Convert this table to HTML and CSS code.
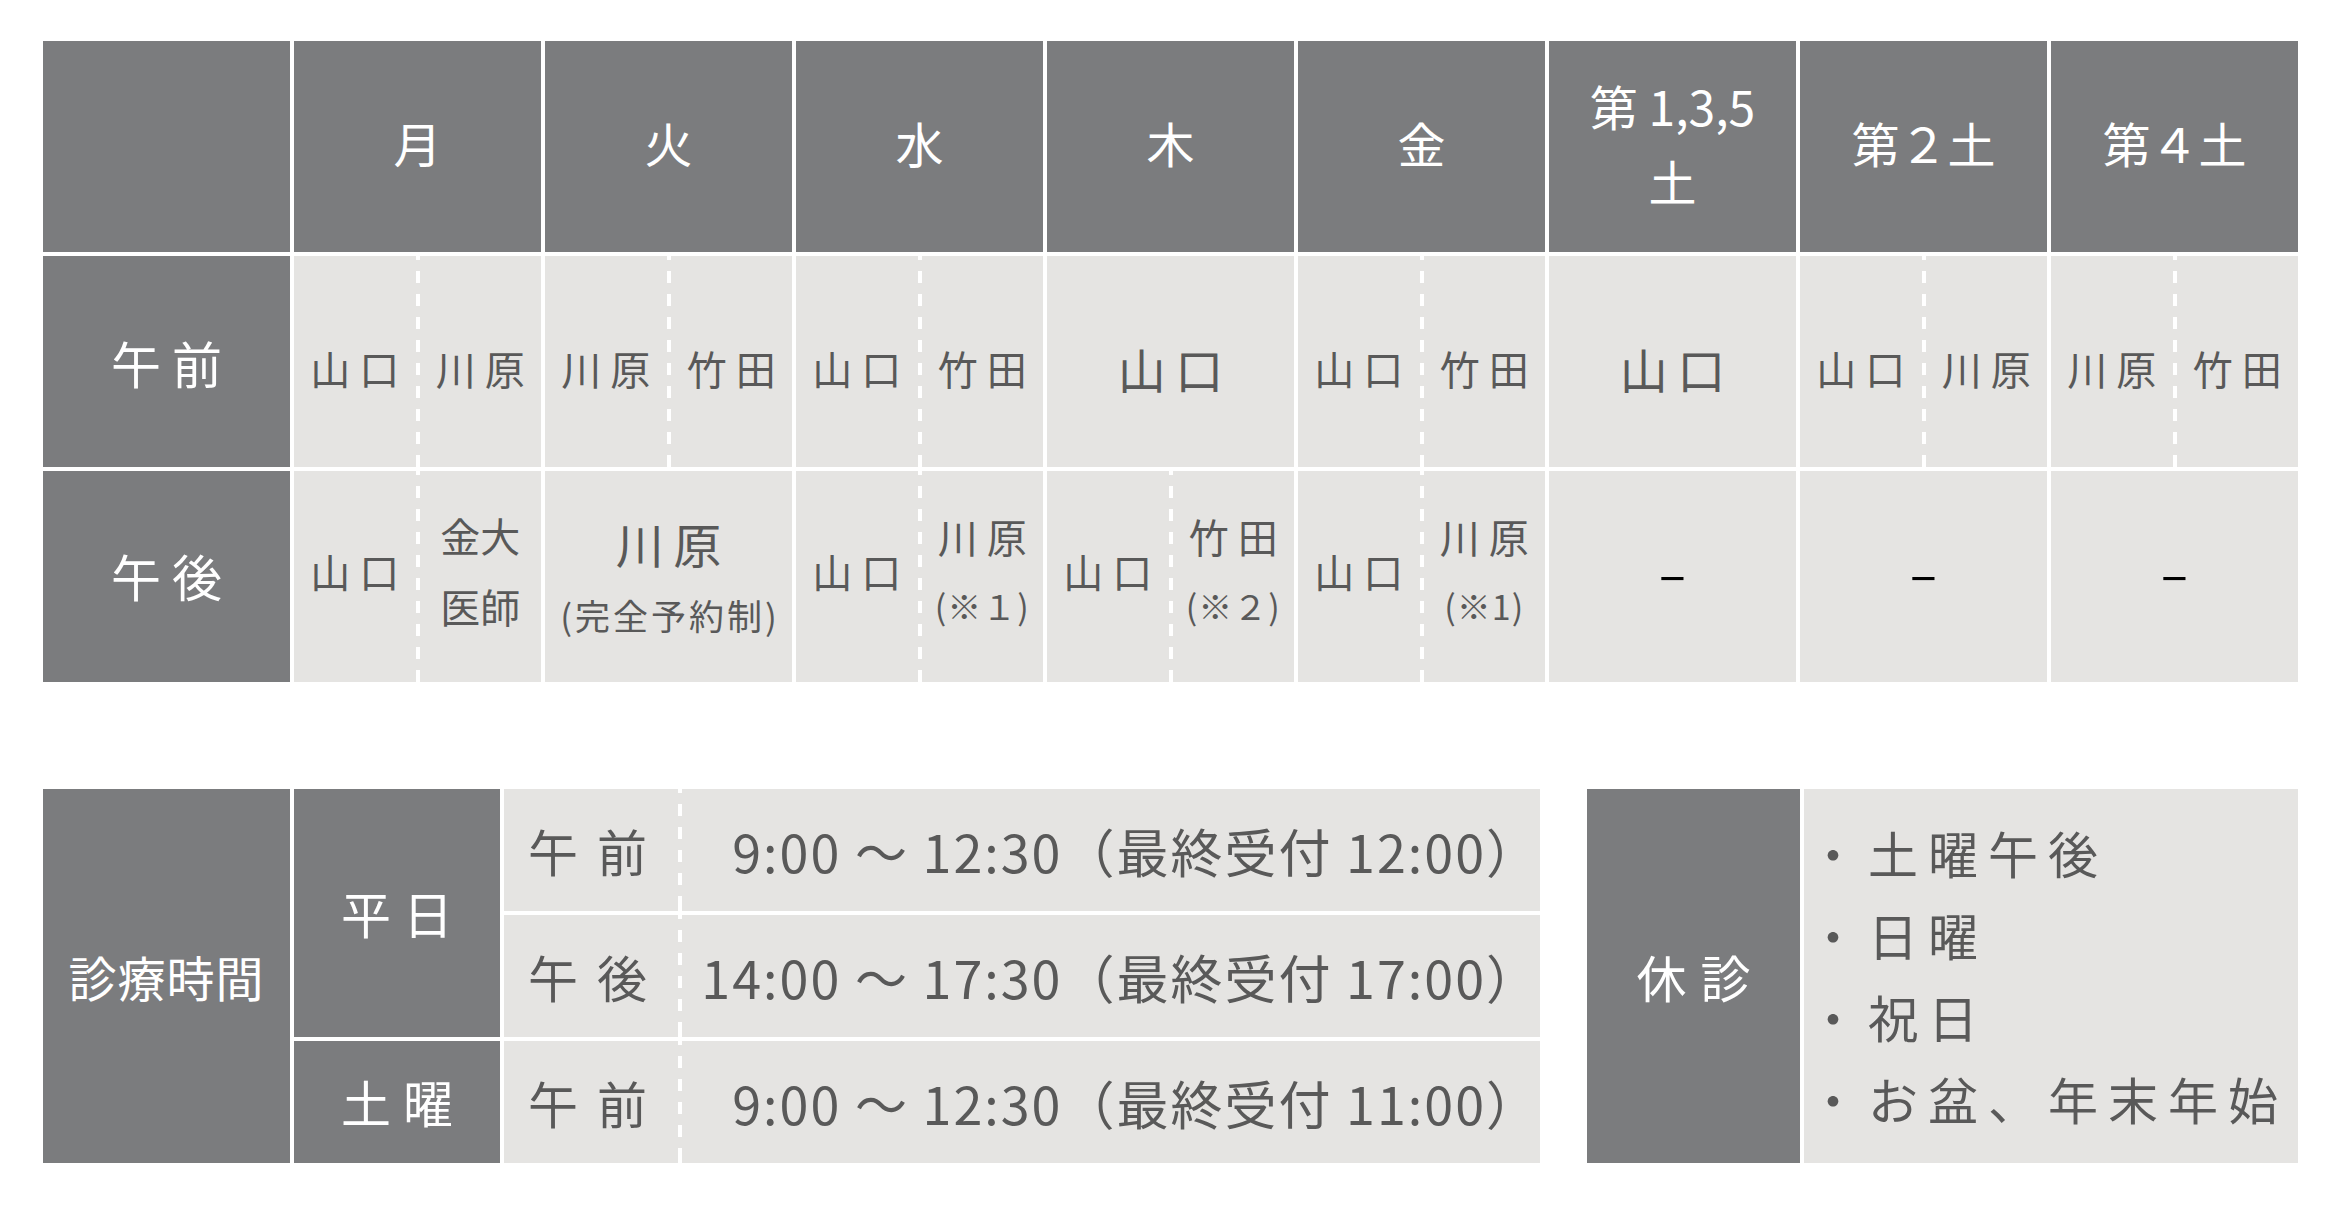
FILE: index.html
```html
<!DOCTYPE html>
<html lang="ja">
<head>
<meta charset="utf-8">
<title>診療時間</title>
<link rel="stylesheet" href="styles.css">
</head>
<body>
<div class="page">
  <div class="schedule">
    <div class="cell dark"></div>
    <div class="cell dark day">月</div>
    <div class="cell dark day">火</div>
    <div class="cell dark day">水</div>
    <div class="cell dark day">木</div>
    <div class="cell dark day">金</div>
    <div class="cell dark day">第 1,3,5<br>土</div>
    <div class="cell dark day">第２土</div>
    <div class="cell dark day">第４土</div>

    <div class="cell dark rowlabel"><span>午前</span></div>
    <div class="cell light split am"><div class="half"><span class="name">山口</span></div><i class="vdash"></i><div class="half"><span class="name">川原</span></div></div>
    <div class="cell light split am"><div class="half"><span class="name">川原</span></div><i class="vdash"></i><div class="half"><span class="name">竹田</span></div></div>
    <div class="cell light split am"><div class="half"><span class="name">山口</span></div><i class="vdash"></i><div class="half"><span class="name">竹田</span></div></div>
    <div class="cell light am"><span class="name big">山口</span></div>
    <div class="cell light split am"><div class="half"><span class="name">山口</span></div><i class="vdash"></i><div class="half"><span class="name">竹田</span></div></div>
    <div class="cell light am"><span class="name big">山口</span></div>
    <div class="cell light split am"><div class="half"><span class="name">山口</span></div><i class="vdash"></i><div class="half"><span class="name">川原</span></div></div>
    <div class="cell light split am"><div class="half"><span class="name">川原</span></div><i class="vdash"></i><div class="half"><span class="name">竹田</span></div></div>

    <div class="cell dark rowlabel pmlabel"><span>午後</span></div>
    <div class="cell light split pm"><div class="half"><span class="name">山口</span></div><i class="vdash"></i><div class="half stack"><span class="name tight">金大</span><span class="name tight">医師</span></div></div>
    <div class="cell light pm-full"><div class="stack"><span class="name big">川原</span><span class="note wide">(完全予約制)</span></div></div>
    <div class="cell light split pm"><div class="half"><span class="name">山口</span></div><i class="vdash"></i><div class="half stack notes"><span class="name">川原</span><span class="note">(※１)</span></div></div>
    <div class="cell light split pm"><div class="half"><span class="name">山口</span></div><i class="vdash"></i><div class="half stack notes"><span class="name">竹田</span><span class="note">(※２)</span></div></div>
    <div class="cell light split pm"><div class="half"><span class="name">山口</span></div><i class="vdash"></i><div class="half stack notes"><span class="name">川原</span><span class="note">(※1)</span></div></div>
    <div class="cell light pm"><span class="none">–</span></div>
    <div class="cell light pm"><span class="none">–</span></div>
    <div class="cell light pm"><span class="none">–</span></div>
  </div>

  <div class="bottom">
    <div class="hours">
      <div class="cell dark title">診療時間</div>
      <div class="cell dark weekday"><span>平日</span></div>
      <div class="light time"><span class="period">午前</span><i class="vdash"></i><span class="range">9:00 ～ 12:30（最終受付 12:00）</span></div>
      <div class="light time"><span class="period">午後</span><i class="vdash"></i><span class="range">14:00 ～ 17:30（最終受付 17:00）</span></div>
      <div class="cell dark weekday"><span>土曜</span></div>
      <div class="light time"><span class="period">午前</span><i class="vdash"></i><span class="range">9:00 ～ 12:30（最終受付 11:00）</span></div>
    </div>
    <div class="closed">
      <div class="cell dark closed-head"><span>休診</span></div>
      <ul class="light closed-list">
        <li>・土曜午後</li>
        <li>・日曜</li>
        <li>・祝日</li>
        <li>・お盆、年末年始</li>
      </ul>
    </div>
  </div>
</div>
</body>
</html>
```

FILE: styles.css
```css
* { box-sizing: border-box; margin: 0; padding: 0; }
html, body { background: #ffffff; }
body {
  font-family: "Noto Sans CJK JP", "Noto Sans", sans-serif;
  color: #595959;
}
.page { width: 2338px; padding: 41px 0 0 43px; }

.schedule {
  display: grid;
  grid-template-columns: repeat(9, 247px);
  grid-template-rows: repeat(3, 211px);
  gap: 4px;
}
.cell {
  display: flex;
  align-items: center;
  justify-content: center;
  text-align: center;
}
.dark { background: #7b7c7e; color: #ffffff; }
.light { background: #e5e4e2; }

.day { font-size: 48px; line-height: 75px; padding-bottom: 8px; }
.rowlabel { font-size: 50px; }
.pmlabel { padding-bottom: 4px; }
.rowlabel span { letter-spacing: 0.22em; margin-right: -0.22em; }

.split {
  display: grid;
  grid-template-columns: 1fr 4px 1fr;
  align-items: center;
}
.half {
  display: flex;
  align-items: center;
  justify-content: center;
}
.vdash {
  display: block;
  align-self: stretch;
  width: 4px;
  background: repeating-linear-gradient(to bottom, #ffffff 0 12px, transparent 12px 23px);
  background-position: 0 -8px;
}
.am { padding-top: 12px; }
.pm { padding-bottom: 12px; }
.pm-full { padding-top: 4px; }
.am .vdash { margin-top: -12px; }
.pm .vdash { margin-bottom: -12px; }

.name {
  display: inline-block;
  font-size: 40px;
  line-height: 1;
  letter-spacing: 0.22em;
  margin-right: -0.22em;
}
.name.tight { letter-spacing: 0; margin-right: 0; }
.name.big { font-size: 48px; letter-spacing: 0.2em; margin-right: -0.2em; }
.stack {
  display: flex;
  flex-direction: column;
  align-items: center;
}
.stack > * { line-height: 71px; }
.stack.notes > * { line-height: 69px; }
.note { font-size: 34px; letter-spacing: 1px; }
.note.wide { font-size: 35px; letter-spacing: 3px; margin-right: -3px; }
.none { font-size: 50px; color: #000000; line-height: 1; }

.bottom { display: flex; margin-top: 107px; }
.hours {
  display: grid;
  grid-template-columns: 247px 206px 1036px;
  grid-template-rows: repeat(3, 122px);
  gap: 4px;
}
.title { grid-row: 1 / 4; font-size: 48px; letter-spacing: 1px; }
.weekday { font-size: 50px; padding-bottom: 2px; }
.hours .weekday:nth-child(2) { grid-row: 1 / 3; }
.weekday span { letter-spacing: 0.24em; margin-right: -0.24em; }
.time { display: flex; align-items: stretch; padding-left: 24px; }
.period {
  width: 150px;
  display: flex;
  align-items: center;
  font-size: 50px;
  letter-spacing: 19px;
}
.range {
  flex: 1;
  display: flex;
  align-items: center;
  justify-content: flex-end;
  font-size: 52px;
  letter-spacing: 2px;
  white-space: nowrap;
}

.closed { display: flex; gap: 4px; margin-left: 47px; height: 374px; }
.closed-head { width: 213px; font-size: 50px; }
.closed-head span { letter-spacing: 14px; margin-right: -14px; }
.closed-list {
  width: 494px;
  list-style: none;
  padding-left: 4px;
  padding-bottom: 2px;
  display: flex;
  flex-direction: column;
  justify-content: center;
  font-size: 50px;
  letter-spacing: 10px;
  line-height: 82px;
}
```
